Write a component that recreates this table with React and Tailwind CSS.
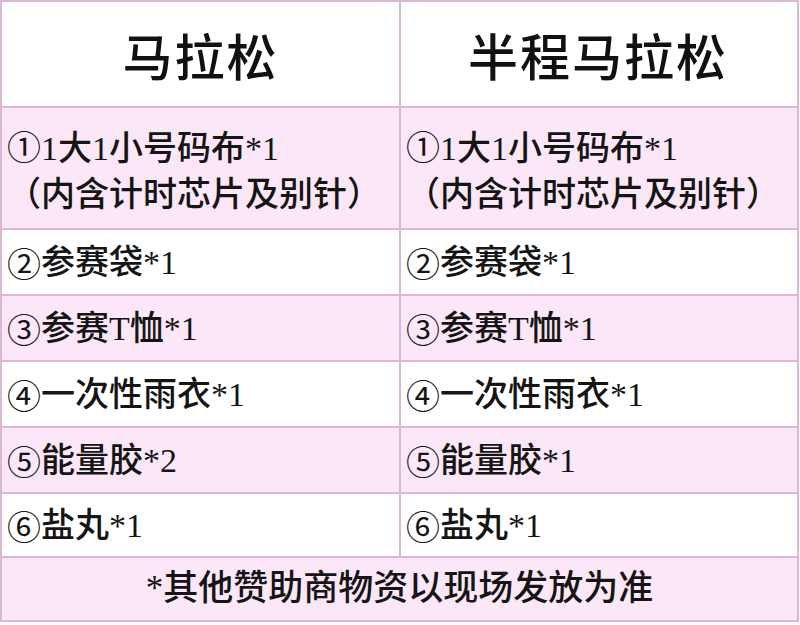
import React from "react";

const rows = [
  { n: "②", left: "参赛袋*1", right: "参赛袋*1", bg: "bg-white", h: "h-[66px]" },
  { n: "③", left: "参赛T恤*1", right: "参赛T恤*1", bg: "bg-[#fbe7f7]", h: "h-[66px]" },
  { n: "④", left: "一次性雨衣*1", right: "一次性雨衣*1", bg: "bg-white", h: "h-[66px]" },
  { n: "⑤", left: "能量胶*2", right: "能量胶*1", bg: "bg-[#fbe7f7]", h: "h-[66px]" },
  { n: "⑥", left: "盐丸*1", right: "盐丸*1", bg: "bg-white", h: "h-[64px]" },
];

const font = {
  fontFamily: '"Liberation Serif", "Noto Sans CJK SC", serif',
};

const Num = ({ children }) => (
  <span style={{ fontFamily: '"Noto Sans CJK SC", sans-serif' }} className="font-normal">
    {children}
  </span>
);

const Cell = ({ children, className = "" }) => (
  <div className={`flex items-center pl-[5px] text-[34px] font-medium text-[#151515] ${className}`}>
    {children}
  </div>
);

export default function App() {
  return (
    <div className="w-[800px] h-[625px] bg-white" style={font}>
      <div className="w-[799px] border-2 border-[#d8b8d2]">
        {/* header */}
        <div className="grid grid-cols-[399px_394px] h-[106px] bg-white border-b-2 border-[#d8b8d2]">
          <div className="flex items-center justify-center border-r-2 border-[#d8b8d2] text-[50px] font-medium text-[#111] tracking-[2px] pt-[10px]">
            马拉松
          </div>
          <div className="flex items-center justify-center text-[50px] font-medium text-[#111] tracking-[2px] pt-[10px]">
            半程马拉松
          </div>
        </div>

        {/* bib row */}
        <div className="grid grid-cols-[399px_394px] h-[122px] bg-[#fbe7f7] border-b-2 border-[#d8b8d2]">
          {[0, 1].map((i) => (
            <div
              key={i}
              className={`flex flex-col justify-center pl-[5px] text-[34px] font-medium text-[#151515] leading-[46px] pt-1 ${
                i === 0 ? "border-r-2 border-[#d8b8d2]" : ""
              }`}
            >
              <span>
                <Num>①</Num>1大1小号码布*1
              </span>
              <span>（内含计时芯片及别针）</span>
            </div>
          ))}
        </div>

        {rows.map((r, idx) => (
          <div
            key={idx}
            className={`grid grid-cols-[399px_394px] ${r.h} ${r.bg} border-b-2 border-[#d8b8d2]`}
          >
            <Cell className="border-r-2 border-[#d8b8d2]">
              <Num>{r.n}</Num>
              {r.left}
            </Cell>
            <Cell>
              <Num>{r.n}</Num>
              {r.right}
            </Cell>
          </div>
        ))}

        {/* footer */}
        <div className="flex items-center justify-center h-[62px] bg-[#fbe7f7] text-[35px] font-medium text-[#151515]">
          *其他赞助商物资以现场发放为准
        </div>
      </div>
    </div>
  );
}
